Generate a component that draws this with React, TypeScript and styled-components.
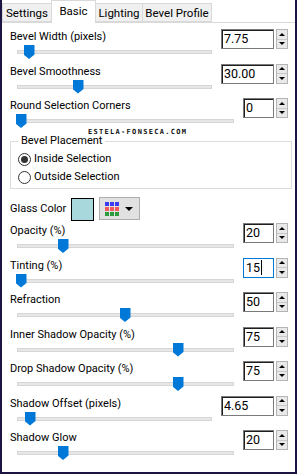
import React from 'react';
import styled, { createGlobalStyle } from 'styled-components';

const Global = createGlobalStyle`
  html, body { margin: 0; padding: 0; background: #fff; }
  body { font-family: Roboto, "Liberation Sans", sans-serif; font-size: 11px; color: #000; }
  * { box-sizing: border-box; }
`;

const Window = styled.div`
  position: relative;
  width: 297px;
  height: 474px;
  border: 2px solid #1c1442;
  border-top: none;
  background: #fff;
  display: flex;
  flex-direction: column;
  overflow: hidden;
`;

const TabStrip = styled.div`
  display: flex;
  align-items: flex-end;
  height: 23px;
  border-bottom: 1px solid #d9d9d9;
  background: #fff;
`;

const Tab = styled.div<{ $w: number; $active?: boolean }>`
  width: ${(p) => p.$w}px;
  height: ${(p) => (p.$active ? 23 : 19)}px;
  margin-bottom: ${(p) => (p.$active ? -1 : 0)}px;
  margin-right: -1px;
  position: relative;
  z-index: ${(p) => (p.$active ? 2 : 1)};
  display: flex;
  align-items: center;
  justify-content: center;
  padding-bottom: ${(p) => (p.$active ? 2 : 0)}px;
  background: ${(p) => (p.$active ? '#fff' : '#f0f0f0')};
  border: 1px solid #d9d9d9;
  border-bottom: ${(p) => (p.$active ? 'none' : '1px solid #d9d9d9')};
  white-space: nowrap;
  line-height: 16px;
  font-size: 11.5px;
`;

const Panel = styled.div`
  flex: 1;
  display: flex;
  flex-direction: column;
  padding: 4px 7px 0 8px;
`;

const Row = styled.div`
  display: grid;
  grid-template-columns: 1fr auto;
  grid-template-rows: 22px 1fr;
  column-gap: 9px;
  height: 34.5px;
`;

const Label = styled.div`
  grid-column: 1;
  grid-row: 1;
  padding-top: 2px;
  line-height: 16px;
  white-space: nowrap;
`;

const SpinGroup = styled.div`
  grid-column: 2;
  grid-row: 1;
  padding-top: 2px;
  display: flex;
  gap: 2px;
  height: 22px;
`;

const NumBox = styled.div<{ $wide?: boolean; $focused?: boolean }>`
  width: ${(p) => (p.$wide ? 53 : 31)}px;
  height: 20px;
  display: flex;
  align-items: center;
  padding-left: 2px;
  font-size: 12.5px;
  line-height: 16px;
  border: 1px solid ${(p) => (p.$focused ? '#0078d7' : '#7a7a7a')};
  box-shadow: ${(p) => (p.$focused ? 'none' : 'inset 1px 1px 0 #1e1e1e')};
  background: #fff;
`;

const Caret = styled.span`
  display: inline-block;
  width: 1px;
  height: 15px;
  margin-left: 1px;
  background: #000;
`;

const Spinner = styled.div`
  width: 12px;
  height: 20px;
  display: flex;
  flex-direction: column;
  border: 1px solid #b4b4b4;
  background: #e9e9e9;
`;

const SpinHalf = styled.div<{ $down?: boolean }>`
  flex: 1;
  display: flex;
  align-items: center;
  justify-content: center;
  border-top: ${(p) => (p.$down ? '1px solid #c8c8c8' : 'none')};
  &::after {
    content: '';
    width: 0;
    height: 0;
    border-left: 3px solid transparent;
    border-right: 3px solid transparent;
    ${(p) => (p.$down ? 'border-top: 3px solid #000;' : 'border-bottom: 3px solid #000;')}
  }
`;

const Track = styled.div`
  grid-column: 1;
  grid-row: 2;
  position: relative;
  margin: 1px 0 0 7px;
  height: 4px;
  background: #e7e7e7;
  border: 1px solid #d6d6d6;
  align-self: start;
`;

const Thumb = styled.div`
  position: absolute;
  top: -6px;
  width: 11px;
  height: 14px;
  background: #0078d7;
  clip-path: polygon(0 0, 100% 0, 100% 68%, 50% 100%, 0 68%);
`;

const Watermark = styled.div`
  position: absolute;
  left: 86px;
  top: 129px;
  font-family: "DejaVu Sans Mono", monospace;
  font-weight: bold;
  font-size: 7px;
  letter-spacing: 1.3px;
  line-height: 6px;
  color: #111;
`;

const Group = styled.fieldset`
  margin: 4.5px -4px 0 0;
  padding: 3px 0 2px 7px;
  border: 1px solid #dcdcdc;
  min-width: 0;
`;

const Legend = styled.legend`
  padding: 0 3px;
  line-height: 12px;
`;

const RadioRow = styled.div`
  display: flex;
  align-items: center;
  height: 18px;
  gap: 3px;
  line-height: 16px;
`;

const RadioDot = styled.span<{ $checked?: boolean }>`
  width: 13px;
  height: 13px;
  border-radius: 50%;
  border: 1px solid #333;
  background: #fff;
  display: flex;
  align-items: center;
  justify-content: center;
  &::after {
    content: '';
    width: 7px;
    height: 7px;
    border-radius: 50%;
    background: ${(p) => (p.$checked ? '#333' : 'transparent')};
  }
`;

const ColorRow = styled.div`
  display: flex;
  align-items: center;
  height: 24px;
  margin-top: 8px;
  gap: 5px;
`;

const ColorLabel = styled.span`
  min-width: 54px;
  line-height: 16px;
  white-space: nowrap;
`;

const Swatch = styled.div`
  width: 23px;
  height: 23px;
  align-self: flex-end;
  border: 1px solid #000;
  background: #a8d8dc;
`;

const PaletteButton = styled.div`
  width: 41px;
  height: 23px;
  align-self: flex-start;
  display: flex;
  align-items: center;
  gap: 6px;
  padding-left: 5px;
  border: 1px solid #adadad;
  background: #e1e1e1;
`;

const DownArrow = styled.span`
  width: 0;
  height: 0;
  border-left: 4px solid transparent;
  border-right: 4px solid transparent;
  border-top: 4px solid #000;
`;

type RowData = { label: string; value: string; thumb: number; wide?: boolean; focused?: boolean };

const topRows: RowData[] = [
  { label: 'Bevel Width (pixels)', value: '7.75', wide: true, thumb: 29 },
  { label: 'Bevel Smoothness', value: '30.00', wide: true, thumb: 78 },
  { label: 'Round Selection Corners', value: '0', thumb: 21 },
];

const bottomRows: RowData[] = [
  { label: 'Opacity (%)', value: '20', thumb: 63 },
  { label: 'Tinting (%)', value: '15', thumb: 21, focused: true },
  { label: 'Refraction', value: '50', thumb: 125 },
  { label: 'Inner Shadow Opacity (%)', value: '75', thumb: 178 },
  { label: 'Drop Shadow Opacity (%)', value: '75', thumb: 178 },
  { label: 'Shadow Offset (pixels)', value: '4.65', wide: true, thumb: 30 },
  { label: 'Shadow Glow', value: '20', thumb: 63 },
];

const SliderRow = ({ r }: { r: RowData }) => (
  <Row>
    <Label>{r.label}</Label>
    <SpinGroup>
      <NumBox $wide={r.wide} $focused={r.focused}>
        {r.value}
        {r.focused && <Caret />}
      </NumBox>
      <Spinner>
        <SpinHalf />
        <SpinHalf $down />
      </Spinner>
    </SpinGroup>
    <Track>
      <Thumb style={{ left: r.thumb - 18 - 5.5 }} />
    </Track>
  </Row>
);

const PaletteIcon = () => (
  <svg width="14" height="14" viewBox="0 0 14 14">
    {[0, 1, 2].map((row) =>
      [0, 1, 2].map((col) => (
        <rect
          key={`${row}-${col}`}
          x={col * 5}
          y={row * 5}
          width="4"
          height="4"
          fill={row === 0 ? '#3a3af0' : row === 1 ? '#f05a5a' : '#2e9a3e'}
        />
      ))
    )}
  </svg>
);

export default function App() {
  return (
    <>
      <Global />
      <Window>
        <TabStrip>
          <Tab $w={50}>Settings</Tab>
          <Tab $w={45} $active>Basic</Tab>
          <Tab $w={48}>Lighting</Tab>
          <Tab $w={70}>Bevel Profile</Tab>
        </TabStrip>
        <Panel>
          {topRows.map((r) => (
            <SliderRow key={r.label} r={r} />
          ))}
          <Group>
            <Legend>Bevel Placement</Legend>
            <RadioRow>
              <RadioDot $checked />
              Inside Selection
            </RadioRow>
            <RadioRow>
              <RadioDot />
              Outside Selection
            </RadioRow>
          </Group>
          <ColorRow>
            <ColorLabel>Glass Color</ColorLabel>
            <Swatch />
            <PaletteButton>
              <PaletteIcon />
              <DownArrow />
            </PaletteButton>
          </ColorRow>
          {bottomRows.map((r) => (
            <SliderRow key={r.label} r={r} />
          ))}
        </Panel>
        <Watermark>ESTELA-FONSECA.COM</Watermark>
      </Window>
    </>
  );
}
